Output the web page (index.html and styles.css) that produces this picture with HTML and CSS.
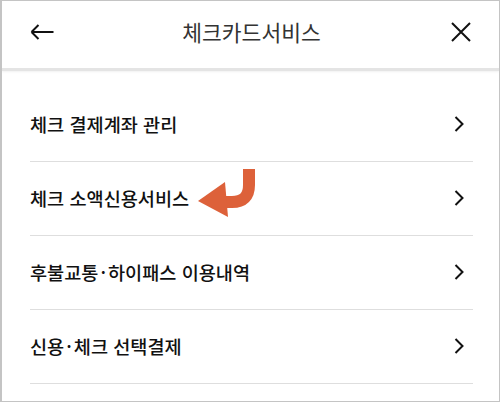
FILE: index.html
```html
<!DOCTYPE html>
<html lang="ko">
<head>
<meta charset="utf-8">
<link rel="stylesheet" href="styles.css">
</head>
<body>
<div class="frame">
  <header class="topbar">
    <button class="icon-btn back" aria-label="뒤로">
      <svg width="24" height="16" viewBox="0 0 24 16"><path d="M1.5 8 H23.5 M1.5 8 L8.5 1 M1.5 8 L8.5 15" fill="none" stroke="#111" stroke-width="2"/></svg>
    </button>
    <h1 class="title">체크카드서비스</h1>
    <button class="icon-btn close" aria-label="닫기">
      <svg width="20" height="20" viewBox="0 0 20 20"><path d="M1 1 L19 19 M19 1 L1 19" fill="none" stroke="#111" stroke-width="2"/></svg>
    </button>
  </header>
  <ul class="menu">
    <li class="item"><span class="label">체크 결제계좌 관리</span><span class="chev"><svg width="10" height="16" viewBox="0 0 10 16"><path d="M1.5 1 L8.5 8 L1.5 15" fill="none" stroke="#111" stroke-width="2"/></svg></span></li>
    <li class="item"><span class="label">체크 소액신용서비스</span>
      <svg class="pointer" width="58" height="49" viewBox="0 0 58 49"><path d="M51 0 V16 Q51 33 34 33 H26" fill="none" stroke="#dd613a" stroke-width="12"/><path d="M0 32 L27 13 L30 48 Z" fill="#dd613a"/></svg>
      <span class="chev"><svg width="10" height="16" viewBox="0 0 10 16"><path d="M1.5 1 L8.5 8 L1.5 15" fill="none" stroke="#111" stroke-width="2"/></svg></span></li>
    <li class="item"><span class="label">후불교통<span class="dot">·</span>하이패스 이용내역</span><span class="chev"><svg width="10" height="16" viewBox="0 0 10 16"><path d="M1.5 1 L8.5 8 L1.5 15" fill="none" stroke="#111" stroke-width="2"/></svg></span></li>
    <li class="item"><span class="label">신용<span class="dot">·</span>체크 선택결제</span><span class="chev"><svg width="10" height="16" viewBox="0 0 10 16"><path d="M1.5 1 L8.5 8 L1.5 15" fill="none" stroke="#111" stroke-width="2"/></svg></span></li>
  </ul>
</div>
</body>
</html>
```
FILE: styles.css
```css
* { box-sizing: border-box; }
html, body { margin: 0; padding: 0; background: #fff; }
body { font-family: "Noto Sans CJK KR", "Noto Sans", sans-serif; color: #111; }
.frame {
  width: 500px;
  height: 402px;
  border: 1px solid #c4c4c4;
  border-left-width: 2px;
  overflow: hidden;
  background: #fff;
}
.topbar {
  height: 70px;
  display: flex;
  align-items: center;
  justify-content: space-between;
  padding: 0 26px 0 28px;
  border-bottom: 3px solid #e4e4e4;
  box-shadow: 0 1px 2px rgba(0,0,0,0.06);
  padding-bottom: 6px;
}
.icon-btn {
  border: 0;
  background: none;
  padding: 0;
  display: flex;
  align-items: center;
  justify-content: center;
  width: 24px;
  height: 24px;
}
.title {
  margin: 0;
  font-size: 21.5px;
  font-weight: 400;
  color: #333;
}
.menu {
  list-style: none;
  margin: 0;
  padding: 17px 26px 0 28px;
}
.item {
  height: 74px;
  border-bottom: 1px solid #dedede;
  display: flex;
  align-items: center;
  padding-bottom: 2px;
}
.label {
  font-size: 18.6px;
  font-weight: 500;
  color: #111;
}
.dot {
  margin: 0 2px;
}
.pointer {
  margin-left: 9px;
  margin-top: -8px;
}
.chev {
  margin-left: auto;
  margin-right: 9px;
  display: flex;
}
```
